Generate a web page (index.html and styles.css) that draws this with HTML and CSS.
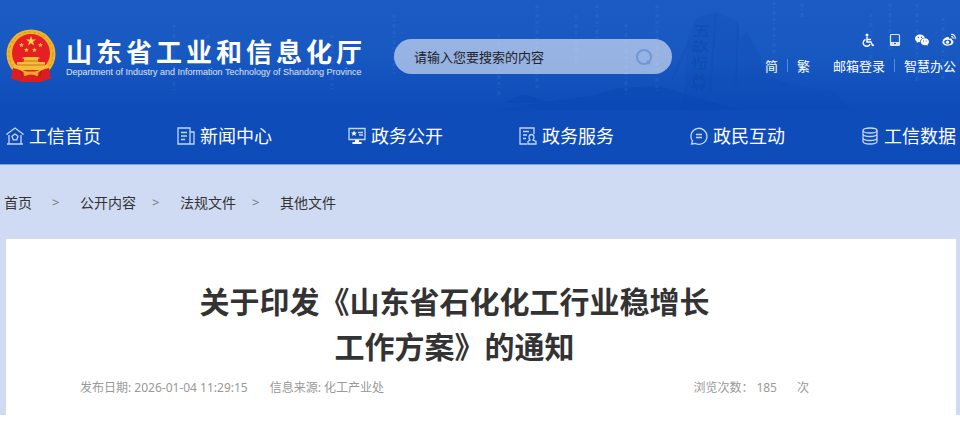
FILE: index.html
```html
<!DOCTYPE html>
<html lang="zh-CN">
    <head>
        <meta charset="UTF-8">
        <meta name="viewport" content="width=device-width, initial-scale=1">
        <title>山东省工业和信息化厅</title>
        <link rel="stylesheet" href="styles.css">
    </head>
    <body>
        <header class="header">
            <!--背景山景-->
            <svg class="scene" viewBox="0 0 960 110" preserveAspectRatio="xMidYMax slice" aria-hidden="true">
                <path d="M500 110L540 103L590 96L620 88L660 86L700 99L740 110zM505 103Q520 93 530 96L550 103z" fill="#0846b2" opacity=".5"/>
                <path d="M684 96L688 36L697 18L716 12L738 22L740 38L747 31L752 42L760 54L766 76L790 84L835 92L850 110H680z" fill="#0846ae" opacity=".16"/>
                <path d="M710 92L716 14M738 24L736 86M672 80L688 44" stroke="#0743a5" stroke-width="2" fill="none" opacity=".14"/>
                <!--石刻纹理-->
                <g stroke="#0a3c9c" stroke-width="1.500" fill="none" opacity=".3">
                    <path d="M695 26h14M702 26l-3 9M697 30h9v5M693 36h16"/>
                    <path d="M693 42h7M696 40v11M693 46h6v5h-6zM702 40l-2 5M701 43h7M706 43q-1 6-6 9M702 45l6 7"/>
                    <path d="M694 57q3 5 0 12M691 64l5-4M698 58h8v4h-8zM701 62v7M698 69h8M705 63v5"/>
                    <path d="M693 77h12M696 74l2 3M703 74l-2 3M694 79h10v6h-10zM691 87h15M702 85v6M696 88l2 2"/>
                </g>
                <g stroke="#6fa2eb" stroke-width="3" stroke-dasharray="3 2 1 3 4 3" opacity=".1">
                    <path d="M174 25V90M208 35V80M332 35V92M394 15V74M499 34V96M537 5V88M576 15V65M597 5V38M626 24V95M657 5V94M774 2V54M802 4V18M871 14V74M890 4V52M917 4V84M943 18V82"/>
                </g>
            </svg>
            <div class="top">
                <a class="logo" href="#">
                    <svg class="emblem" viewBox="0 0 50 54" aria-hidden="true">
                        <path d="M8 38L6 50L16 53H35L44 50L42 38z" fill="#d81e20"/>
                        <circle cx="25" cy="25" r="24.500" fill="#f0b52c"/>
                        <circle cx="25" cy="25" r="22" fill="none" stroke="#d4911e" stroke-width="1" stroke-dasharray="3 2"/>
                        <circle cx="25" cy="24" r="19" fill="#e71f25"/>
                        <path d="M25 7l1.200 3.500h3.800l-3 2.300 1.100 3.700-3.100-2.200-3.100 2.200 1.100-3.700-3-2.300h3.800z" fill="#f9d247"/>
                        <g fill="#f3bf36">
                            <path id="star" d="M15.500 13.500l.7 1.500 1.600.2-1.200 1.200.3 1.600-1.400-.8-1.500.8.3-1.600-1.200-1.200 1.700-.2z"/>
                            <use href="#star" x="19"/>
                            <use href="#star" x="5" y="5"/>
                            <use href="#star" x="13" y="5"/>
                            <path d="M16 29l2-1h14l2 1-2 1v3h7v3h3v5H8v-5h3v-3h7v-3z"/>
                        </g>
                        <path d="M11 36H39M17 32H33" stroke="#ce701d" stroke-width="1"/>
                        <path d="M7 39Q16 41 18 44H32Q34 41 43 39L45 50L36 49L33 53Q25 48 17 53L14 49L5 50z" fill="#df1d20"/>
                        <path d="M18 46Q25 42 32 46" fill="none" stroke="#f0a82a" stroke-width="3"/>
                        <path d="M14 42Q17 45 16 49M36 42Q33 45 34 49" fill="none" stroke="#b3181b" stroke-width="1"/>
                    </svg>
                    <span class="logo-text">
                        <span class="logo-cn">山东省工业和信息化厅</span>
                        <span class="logo-en">Department of Industry and Information Technology of Shandong Province</span>
                    </span>
                </a>
                <form class="search">
                    <input type="text" placeholder="请输入您要搜索的内容" aria-label="搜索">
                    <button type="button" aria-label="搜索">
                        <svg viewBox="0 0 18 18"><circle cx="9" cy="9" r="7"/><path d="M12 13l3 3"/></svg>
                    </button>
                </form>
                <div class="tools">
                    <div class="tool-icons">
                        <a href="#" aria-label="无障碍"><svg viewBox="0 0 14 14"><circle cx="6" cy="2" r="1.500" fill="#fff"/><path d="M6 4v5h4l1.500 3.500 1.500-.5M6 6.500h4M4.500 6.500A3.500 3.500 0 1 0 9 11" fill="none" stroke="#fff" stroke-width="1.400"/></svg></a>
                        <a href="#" aria-label="手机版"><svg viewBox="0 0 14 14"><path d="M3.500 1.500h7a1 1 0 0 1 1 1v9a1 1 0 0 1-1 1h-7a1 1 0 0 1-1-1v-9a1 1 0 0 1 1-1z" fill="none" stroke="#dbe7fa" stroke-width="1.200"/><path d="M3 9h8v3H3z" fill="#dbe7fa"/><path d="M6 10.500h2" stroke="#1855be"/></svg></a>
                        <a href="#" aria-label="微信"><svg viewBox="0 0 14 14"><path d="M5 1.500c-3 0-5 1.900-5 4 0 1.300.7 2.300 1.800 3L1.500 10l2-1 1.500.2z M5 1.500c2.500 0 4.500 1.400 4.900 3.300C7 4.800 5 6.500 5 9.200z" fill="#fff"/><path d="M9.900 5.300c-2.400 0-4.200 1.600-4.200 3.500s1.800 3.400 4.200 3.400l1.400-.2 1.500.9-.4-1.400c1-.6 1.600-1.600 1.600-2.700 0-1.900-1.800-3.500-4.100-3.500z" fill="#fff"/><g fill="#1855be"><circle cx="3.400" cy="4.500" r=".7"/><circle cx="6.500" cy="4.200" r=".7"/><circle cx="8.500" cy="8" r=".6"/><circle cx="11.200" cy="8" r=".6"/></g></svg></a>
                        <a href="#" aria-label="微博"><svg viewBox="0 0 14 14"><path d="M5.500 4C3.500 4 .5 6.500.5 9s2.500 3.700 5.300 3.700c3.500 0 5.700-1.800 5.700-3.600 0-1.300-1-1.800-1.700-2 .6-1.500-.4-2.200-2.800-1.300C7.400 4.500 6.700 4 5.500 4z" fill="#fff"/><ellipse cx="5.700" cy="9.100" rx="3.500" ry="2.300" fill="#1855be"/><circle cx="5.500" cy="9.200" r="1.600" fill="#fff"/><path d="M9 1.500c3-.5 4.800 1.800 4 4.500M9.200 3.700c1.300-.2 2.100.7 1.700 1.900" fill="none" stroke="#fff" stroke-width="1.100"/></svg></a>
                    </div>
                    <div class="tool-links">
                        <a href="#">简</a><i></i><a href="#">繁</a>
                        <a class="mail" href="#">邮箱登录</a><i></i><a href="#">智慧办公</a>
                    </div>
                </div>
            </div>
            <!--导航-->
            <nav class="nav">
                <a href="#"><svg viewBox="0 0 18 18"><path d="M1 8V7l8-6 8 6v1M3 8v9M15 8v9M1 17h16"/><path d="M9 7l3 2.300-1.200 3.500H7.200L6 9.300z"/></svg>工信首页</a>
                <a href="#"><svg viewBox="0 0 18 18"><path d="M1 1h12v16H1zM13 5h4v12h-4M4 5.500h6M4 9h6M4 12.500h4"/></svg>新闻中心</a>
                <a href="#"><svg viewBox="0 0 18 18"><path d="M1 1.500h16v11H1zM10 5.500h5M11 8h4M9 13v3M4 16h10"/><path d="M6 3.500l.9 2h2l-1.600 1.400.6 2.100L6 7.800 4.100 9l.6-2.100L3.100 5.500h2z" fill="#fff" stroke="none"/><path d="M7 13h4v2h2v2H5v-2h2z" fill="#fff" stroke="none"/></svg>政务公开</a>
                <a href="#"><svg viewBox="0 0 18 18"><path d="M8 17H1V1h14v6M4 4.500h6M4 8h4M4 11.500h3"/><path d="M11 13c-1.500-1.500-1.500-5.500 1.500-5.500s3 4 1.500 5.500l3 1.500V17H9v-2.500z"/></svg>政务服务</a>
                <a href="#"><svg viewBox="0 0 18 18"><path d="M1.500 17l1-3A8 8 0 1 1 5.500 16.500zM6 7.500h6M6 10.500h6"/></svg>政民互动</a>
                <a href="#"><svg viewBox="0 0 18 18"><ellipse cx="9" cy="3.500" rx="7" ry="2.500"/><path d="M2 3.500v11c0 3.300 14 3.300 14 0v-11M2 7c0 3.300 14 3.300 14 0M2 11c0 3.300 14 3.300 14 0"/></svg>工信数据</a>
            </nav>
        </header>
        <main class="main">
            <div class="crumbs">
                <a class="home" href="#">首页</a><span>&gt;</span>
                <a href="#">公开内容</a><span>&gt;</span>
                <a href="#">法规文件</a><span>&gt;</span>
                <a href="#">其他文件</a>
            </div>
            <article class="article">
                <h1>关于印发《山东省石化化工行业稳增长<br>工作方案》的通知</h1>
                <div class="info">
                    <span>发布日期: 2026-01-04 11:29:15</span>
                    <span>信息来源: 化工产业处</span>
                    <span class="views">浏览次数：<b>185</b>次</span>
                </div>
            </article>
        </main>
    </body>
</html>
```
FILE: styles.css
```css
*{
    box-sizing: border-box;
}
body{
    margin: 0;
    background-color: #fff;
    font-family: "Noto Sans", "Noto Sans CJK SC", sans-serif;
    color: #333;
}
a{
    color: inherit;
    text-decoration: none;
}
svg{
    display: block;
    flex: none;
}
.header{
    position: relative;
    background: linear-gradient(#1b5bc3 0, #1858c1 55px, #0e4cb9 108px);
    border-bottom: 1px solid #7f9fdc;
    color: #fff;
}
.scene{
    position: absolute;
    top: 0;
    left: 0;
    width: 100%;
    height: 110px;
}
.top{
    position: relative;
    display: flex;
    align-items: center;
    height: 108px;
    padding: 0 4px 0 6px;
}
.logo{
    display: flex;
    align-items: center;
    gap: 10px;
    padding-top: 3px;
}
.emblem{
    width: 50px;
    height: 54px;
}
.logo-text{
    display: flex;
    flex-direction: column;
    white-space: nowrap;
}
.logo-cn{
    font-family: "Noto Sans CJK SC", sans-serif;
    font-size: 26px;
    line-height: 32px;
    font-weight: bold;
    letter-spacing: 4px;
}
.logo-en{
    font-family: "Liberation Sans", Arial, sans-serif;
    font-size: 9px;
    line-height: 10px;
    opacity: .85;
}
.search{
    display: flex;
    align-items: center;
    width: 278px;
    height: 35px;
    margin: 5px 0 0 28px;
    padding: 0 19px 0 20px;
    border-radius: 18px;
    background-color: rgba(255, 255, 255, .55);
}
.search input{
    flex: 1;
    min-width: 0;
    padding: 0;
    border: 0;
    outline: 0;
    background: none;
    font-family: inherit;
    font-size: 13px;
    color: #222;
}
.search input::placeholder{
    color: #222;
}
.search button{
    padding: 0;
    border: 0;
    background: none;
    cursor: pointer;
}
.search svg{
    width: 18px;
    height: 18px;
    fill: none;
    stroke: #7097d7;
    stroke-width: 2;
}
.tools{
    margin-left: auto;
    font-size: 13px;
    line-height: 20px;
    white-space: nowrap;
}
.tool-icons{
    display: flex;
    justify-content: flex-end;
    gap: 13px;
    margin-bottom: 9px;
}
.tool-icons svg{
    width: 14px;
    height: 14px;
}
.tool-links{
    display: flex;
    align-items: center;
}
.tool-links i{
    width: 1px;
    height: 13px;
    margin: 0 9px;
    background-color: #4d8ddf;
}
.tool-links .mail{
    margin-left: 23px;
}
.nav{
    position: relative;
    display: flex;
    justify-content: space-between;
    padding: 0 4px 0 6px;
    font-size: 18px;
    line-height: 56px;
}
.nav a{
    display: flex;
    align-items: center;
    gap: 5px;
}
.nav svg{
    width: 18px;
    height: 18px;
    fill: none;
    stroke: #c4d6f5;
    stroke-width: 1.3;
}
.main{
    padding: 0 4px 0 6px;
    background-color: #cfdbf2;
}
.crumbs{
    display: flex;
    align-items: center;
    height: 74px;
    margin-left: -2px;
    font-size: 14px;
}
.crumbs span{
    width: 44px;
    padding-left: 16px;
    font-size: 13px;
    color: #777;
}
.crumbs .home{
    margin-right: 4px;
}
.article{
    padding: 40px 127px 13px 74px;
    background-color: #fff;
}
.article h1{
    margin: 0 0 5px;
    font-size: 30px;
    line-height: 45px;
    text-align: center;
}
.info{
    display: flex;
    gap: 22px;
    font-size: 12px;
    line-height: 28px;
    color: #999;
}
.info .views{
    margin-left: auto;
    padding-right: 20px;
}
.info b{
    margin: 0 20px 0 3px;
    font-weight: normal;
}
```
